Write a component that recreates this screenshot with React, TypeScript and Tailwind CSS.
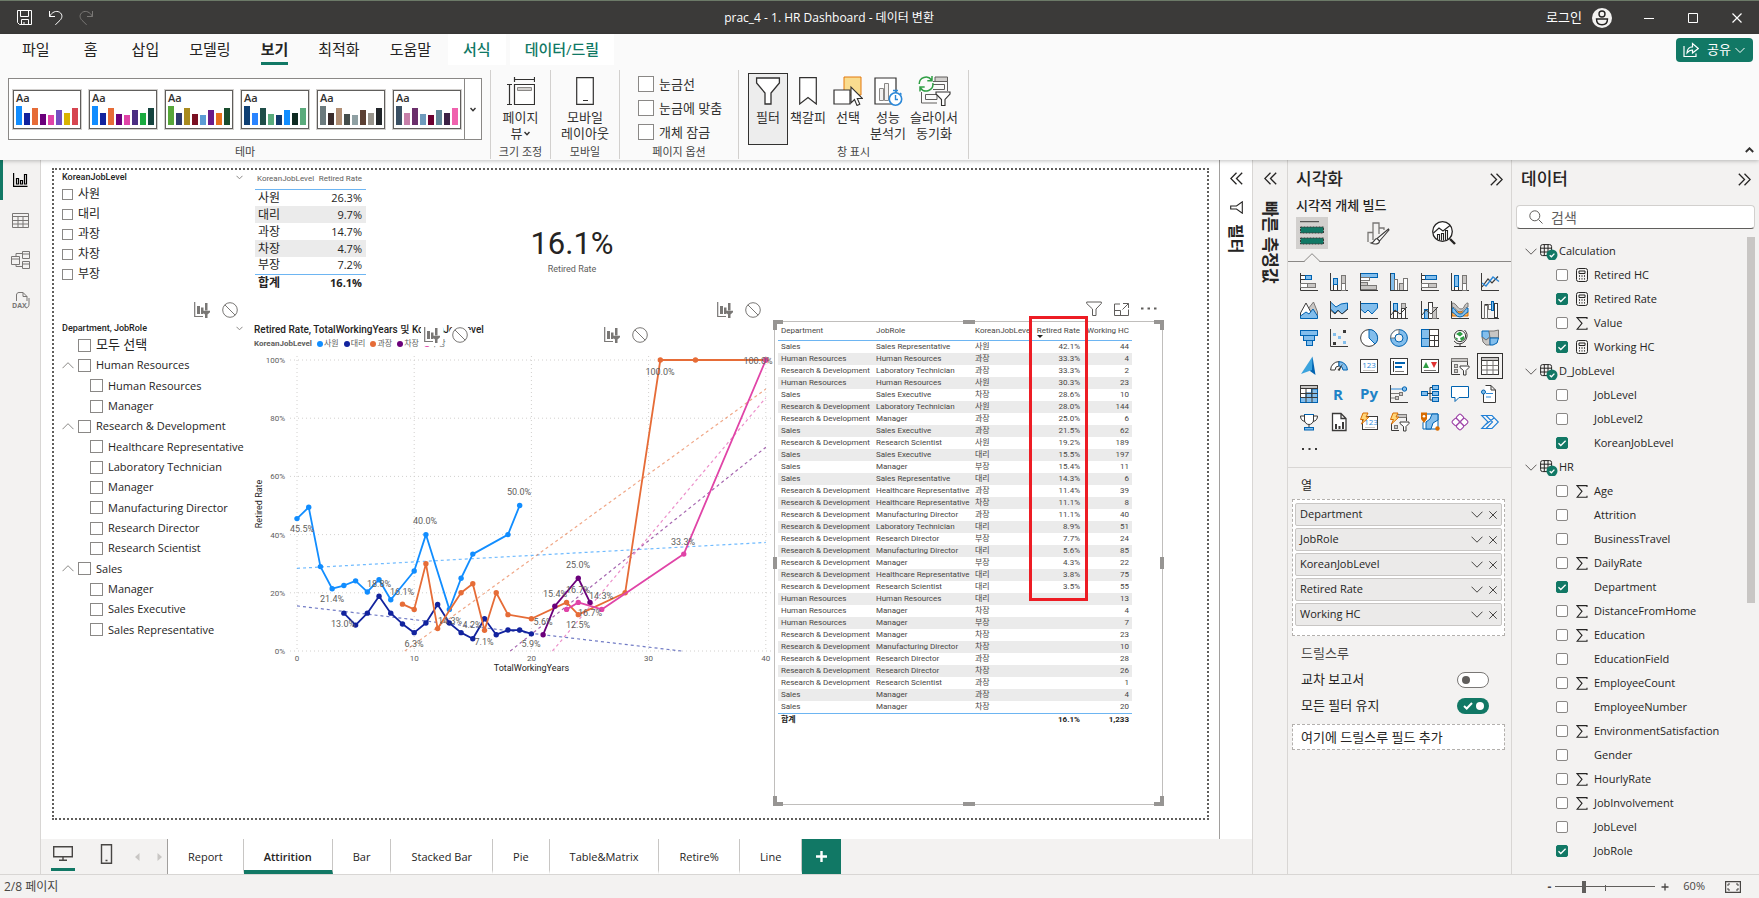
import React from "react";
import clsx from "clsx";

/* ---------- data ---------- */

const themes = [
  ["#118dff", "#12239e", "#e66c37", "#6b007b", "#e044a7", "#744ec2", "#d9b300", "#d64550"],
  ["#118dff", "#12239e", "#e66c37", "#6b007b", "#e044a7", "#4b2e83", "#1aab40", "#15443f"],
  ["#57a639", "#2f3b6e", "#a98b1f", "#7a1022", "#5b9bd5", "#6a1b8a", "#e8701a", "#1a4d2e"],
  ["#0f3f73", "#2a84ff", "#1f4e48", "#5aab7c", "#123a6b", "#118dff", "#0f2b22", "#5aab7c"],
  ["#6b7a7d", "#3a2c2c", "#b08e74", "#444d4b", "#8fa0a3", "#5c4033", "#98948c", "#22262a"],
  ["#3a5064", "#c77fa9", "#6b2f6b", "#6f9bbd", "#6b0030", "#5f8597", "#3d2145", "#f062ae"],
];
const themeBars = [19, 12, 17, 11, 10, 15, 12, 17];

const jobLevels = ["사원", "대리", "과장", "차장", "부장"];

const levelRates = [
  ["사원", "26.3%"],
  ["대리", "9.7%"],
  ["과장", "14.7%"],
  ["차장", "4.7%"],
  ["부장", "7.2%"],
];

const roleTree: { label: string; level: number; open?: boolean }[] = [
  { label: "모두 선택", level: 0 },
  { label: "Human Resources", level: 0, open: true },
  { label: "Human Resources", level: 1 },
  { label: "Manager", level: 1 },
  { label: "Research & Development", level: 0, open: true },
  { label: "Healthcare Representative", level: 1 },
  { label: "Laboratory Technician", level: 1 },
  { label: "Manager", level: 1 },
  { label: "Manufacturing Director", level: 1 },
  { label: "Research Director", level: 1 },
  { label: "Research Scientist", level: 1 },
  { label: "Sales", level: 0, open: true },
  { label: "Manager", level: 1 },
  { label: "Sales Executive", level: 1 },
  { label: "Sales Representative", level: 1 },
];

const HR = "Human Resources";
const RD = "Research & Development";
const rows: [string, string, string, string, string][] = [
  ["Sales", "Sales Representative", "사원", "42.1%", "44"],
  [HR, "Human Resources", "과장", "33.3%", "4"],
  [RD, "Laboratory Technician", "과장", "33.3%", "2"],
  [HR, "Human Resources", "사원", "30.3%", "23"],
  ["Sales", "Sales Executive", "차장", "28.6%", "10"],
  [RD, "Laboratory Technician", "사원", "28.0%", "144"],
  [RD, "Manager", "과장", "25.0%", "6"],
  ["Sales", "Sales Executive", "과장", "21.5%", "62"],
  [RD, "Research Scientist", "사원", "19.2%", "189"],
  ["Sales", "Sales Executive", "대리", "15.5%", "197"],
  ["Sales", "Manager", "부장", "15.4%", "11"],
  ["Sales", "Sales Representative", "대리", "14.3%", "6"],
  [RD, "Healthcare Representative", "과장", "11.4%", "39"],
  [RD, "Healthcare Representative", "차장", "11.1%", "8"],
  [RD, "Manufacturing Director", "과장", "11.1%", "40"],
  [RD, "Laboratory Technician", "대리", "8.9%", "51"],
  [RD, "Research Director", "부장", "7.7%", "24"],
  [RD, "Manufacturing Director", "대리", "5.6%", "85"],
  [RD, "Manager", "부장", "4.3%", "22"],
  [RD, "Healthcare Representative", "대리", "3.8%", "75"],
  [RD, "Research Scientist", "대리", "3.5%", "55"],
  [HR, "Human Resources", "대리", "", "13"],
  [HR, "Manager", "차장", "", "4"],
  [HR, "Manager", "부장", "", "7"],
  [RD, "Manager", "차장", "", "23"],
  [RD, "Manufacturing Director", "차장", "", "10"],
  [RD, "Research Director", "과장", "", "28"],
  [RD, "Research Director", "차장", "", "26"],
  [RD, "Research Scientist", "과장", "", "1"],
  ["Sales", "Manager", "과장", "", "4"],
  ["Sales", "Manager", "차장", "", "20"],
];

type Point = [number, number];
const series: { name: string; color: string; points: Point[]; trend: [Point, Point] }[] = [
  {
    name: "사원",
    color: "#118dff",
    points: [[0, 45.5], [1, 49.4], [2, 29], [3, 21.4], [4, 22.5], [5, 24.1], [6, 20.3], [7, 24.5], [8, 17.6], [10, 27.5], [11, 40], [13, 14.3], [14, 25], [15, 33.3], [18, 40], [19, 50]],
    trend: [[0, 28.4], [40, 37.3]],
  },
  {
    name: "대리",
    color: "#12239e",
    points: [[4, 13], [5, 8.9], [6, 13], [7, 18.8], [8, 13], [9, 9.3], [10, 6.3], [11, 9.6], [12, 16], [13, 9.6], [14, 6.3], [15, 4.2], [16, 11.1], [17, 5.6], [18, 7.2], [19, 7.2], [20, 5.9]],
    trend: [[0, 15.5], [32.8, 0]],
  },
  {
    name: "과장",
    color: "#e66c37",
    points: [[9, 16.1], [10, 14.3], [11, 30], [12, 7.7], [14, 20], [15, 23.1], [16, 7.1], [17, 20], [18, 12.5], [20, 11.1], [23, 16.7], [24, 12.5], [28, 20], [31, 100], [34, 100], [40, 100]],
    trend: [[9.2, 0], [40, 90]],
  },
  {
    name: "차장",
    color: "#6b007b",
    points: [[21, 5.6], [22, 15.4], [24, 25], [25, 16.7]],
    trend: [[18.2, 0], [40, 70]],
  },
  {
    name: "부장",
    color: "#e044a7",
    points: [[23, 14.3], [24, 16.7], [26, 14.3], [33, 33.3], [40, 100]],
    trend: [[21.8, 0], [40, 87]],
  },
];

// [text, x, y] of the data labels inside the plot
const dataLabels: [string, number, number][] = [
  ["45.5%", 52, 178], ["21.4%", 82, 248], ["13.0%", 93, 273], ["18.8%", 129, 233],
  ["16.1%", 152, 241], ["40.0%", 175, 170], ["6.3%", 164, 293], ["14.3%", 200, 270],
  ["4.2%", 222, 274], ["7.1%", 234, 291], ["50.0%", 269, 141], ["5.9%", 281, 293],
  ["5.6%", 293, 271], ["15.4%", 305, 243], ["16.7%", 328, 239], ["14.3%", 351, 245],
  ["16.7%", 340, 262], ["12.5%", 328, 274], ["25.0%", 328, 214], ["33.3%", 433, 191],
  ["100.0%", 410, 21], ["100.0%", 508, 10],
];

type Field = { name: string; kind?: "calc" | "sum"; on?: boolean };
const tables: { name: string; fields: Field[] }[] = [
  {
    name: "Calculation",
    fields: [
      { name: "Retired HC", kind: "calc" },
      { name: "Retired Rate", kind: "calc", on: true },
      { name: "Value", kind: "sum" },
      { name: "Working HC", kind: "calc", on: true },
    ],
  },
  {
    name: "D_JobLevel",
    fields: [{ name: "JobLevel" }, { name: "JobLevel2" }, { name: "KoreanJobLevel", on: true }],
  },
  {
    name: "HR",
    fields: [
      { name: "Age", kind: "sum" },
      { name: "Attrition" },
      { name: "BusinessTravel" },
      { name: "DailyRate", kind: "sum" },
      { name: "Department", on: true },
      { name: "DistanceFromHome", kind: "sum" },
      { name: "Education", kind: "sum" },
      { name: "EducationField" },
      { name: "EmployeeCount", kind: "sum" },
      { name: "EmployeeNumber" },
      { name: "EnvironmentSatisfaction", kind: "sum" },
      { name: "Gender" },
      { name: "HourlyRate", kind: "sum" },
      { name: "JobInvolvement", kind: "sum" },
      { name: "JobLevel" },
      { name: "JobRole", on: true },
    ],
  },
];

const pages = ["Report", "Attirition", "Bar", "Stacked Bar", "Pie", "Table&Matrix", "Retire%", "Line"];

/* ---------- small pieces ---------- */

const Svg: React.FC<React.SVGProps<SVGSVGElement> & { s?: number; w?: number; h?: number }> = ({ s = 16, w, h, children, ...rest }) => (
  <svg width={w ?? s} height={h ?? s} viewBox={`0 0 ${w ?? s} ${h ?? s}`} fill="none" stroke="currentColor" className="shrink-0" aria-hidden="true" {...rest}>
    {children}
  </svg>
);

const ChevronDown = ({ w = 12 }: { w?: number }) => (
  <Svg w={w} h={7}>
    <path d={w === 12 ? "M.5 .7 6 6.2 11.5 .7" : "M.5 1 5 5.5 9.5 1"} />
  </Svg>
);

const ChevronUp = () => (
  <Svg w={12} h={7}>
    <path d="M.5 6.2 6 .7 11.5 6.2" />
  </Svg>
);

const DoubleChevron = ({ left }: { left?: boolean }) => (
  <Svg w={13} h={13}>
    <path d={left ? "M6.5 .8.8 6.5 6.5 12.2M12.2 .8 6.5 6.5 12.2 12.2" : "M.8 .8 6.5 6.5 .8 12.2M6.5 .8 12.2 6.5 6.5 12.2"} strokeWidth="1.3" />
  </Svg>
);

const Check = ({ on, size, label }: { on?: boolean; size: string; label: string }) => (
  <span className="relative flex shrink-0">
    <input
      type="checkbox"
      defaultChecked={on}
      aria-label={label}
      className={clsx("peer appearance-none border border-[#8a8886] bg-white checked:border-[#117865] checked:bg-[#117865]", size)}
    />
    <svg viewBox="0 0 12 12" className="pointer-events-none absolute inset-0 hidden peer-checked:block" fill="none" stroke="#fff" strokeWidth="1.3">
      <path d="M2.5 6.2 4.8 8.5 9.6 3.7" />
    </svg>
  </span>
);

/* ---------- title bar and ribbon ---------- */

const TitleBar = () => (
  <header className="flex h-[34px] shrink-0 items-center border-t border-[#6c7a68] bg-[#3b3a39] text-white">
    <div className="flex flex-6 items-center gap-4 pl-[17px]">
      <button aria-label="저장">
        <Svg s={15}>
          <path d="M.5 .5H14.5V14.5H2.5L.5 12.5ZM3.5 .5V6.5H11.5V.5M4.5 14.5V9.5H11.5V14.5M7 12V14" />
        </Svg>
      </button>
      <button aria-label="실행 취소">
        <Svg s={15}>
          <path d="M1.5 1V6.5H7M1.5 6.5C4 2 8 .3 11.5 2.2 15 4.5 14.3 8 12 10.3L7.2 15" />
        </Svg>
      </button>
      <button aria-label="다시 실행" className="text-[#7a7876]">
        <Svg s={15}>
          <path d="M13.5 1V6.5H8M13.5 6.5C11 2 7 .3 3.5 2.2 0 4.5 .7 8 3 10.3L7.8 15" />
        </Svg>
      </button>
    </div>
    <h1 className="text-[12px]">prac_4 - 1. HR Dashboard - 데이터 변환</h1>
    <div className="flex flex-7 items-center justify-end">
      <button className="flex items-center gap-2.5 text-[13px]">
        로그인
        <svg width="20" height="20" viewBox="0 0 20 20" aria-hidden="true">
          <circle cx="10" cy="10" r="10" fill="#f3f2f1" />
          <circle cx="10" cy="6" r="3" fill="none" stroke="#252423" strokeWidth="1.4" />
          <path d="M4.5 11H15.5C15.5 15 13 16.8 10 16.8S4.5 15 4.5 11Z" fill="none" stroke="#252423" strokeWidth="1.4" />
        </svg>
      </button>
      <button aria-label="최소화" className="ml-8">
        <Svg s={10}><path d="M0 5.5H10" /></Svg>
      </button>
      <button aria-label="최대화" className="ml-[34px]">
        <Svg s={10}><path d="M.5 .5H9.5V9.5H.5Z" /></Svg>
      </button>
      <button aria-label="닫기" className="mr-[17px] ml-[34px]">
        <Svg s={10}><path d="M.5 .5 9.5 9.5M9.5 .5 .5 9.5" strokeWidth="1.2" /></Svg>
      </button>
    </div>
  </header>
);

const menu = ["파일", "홈", "삽입", "모델링", "보기", "최적화", "도움말"];

const MenuTabs = () => (
  <nav className="flex h-8 pl-[7px] text-[15px] text-[#252423]">
    {menu.map((m) => (
      <button key={m} className={clsx("flex h-[31px] justify-center px-[15px]", m === "홈" && "min-w-[52px]")}>
        <span className={clsx("flex h-full items-center border-b-[3px] pt-0.5", m === "보기" ? "border-[#117865] font-bold" : "border-transparent")}>{m}</span>
      </button>
    ))}
    <button className="ml-0.5 h-[31px] bg-white px-[15px] font-medium text-[#117865]">서식</button>
    <button className="ml-1 h-[31px] bg-white px-[15px] font-medium text-[#117865]">데이터/드릴</button>
    <div className="flex flex-1 justify-end pt-1 pr-1.5">
      <button className="flex h-6 items-center rounded bg-[#117865] pr-2 pl-[7px] text-[13px] text-white">
        <Svg s={16} className="mr-2">
          <path d="M1 4V14.5H13V11.5M4 11C4 7 6.5 4.8 9.5 4.8V1.5L15.3 6.5 9.5 11V8C7 8 5.5 9 4 11Z" strokeWidth="1.2" />
        </Svg>
        공유
        <span className="ml-1"><ChevronDown w={10} /></span>
      </button>
    </div>
  </nav>
);

const Group: React.FC<{ label: string; className: string; children: React.ReactNode }> = ({ label, className, children }) => (
  <section className={clsx("mt-1 flex h-[89px] flex-col border-r border-[#d2d0ce]", className)}>
    <div className="h-[75px]">{children}</div>
    <p className="text-center text-[11px] leading-[14px] text-[#444]">{label}</p>
  </section>
);

const RibbonButton: React.FC<{ icon: React.ReactNode; className?: string; on?: boolean; children: React.ReactNode }> = ({ icon, className = "w-10", on, children }) => (
  <button className={clsx("mt-[3px] flex h-[72px] flex-col items-center gap-1 border pt-[3px] text-[13px] leading-4 whitespace-nowrap", on ? "border-[#323130] bg-[#ededed]" : "border-transparent", className)}>
    <span className="flex h-7 items-center">{icon}</span>
    <span>{children}</span>
  </button>
);

const funnel28 = (
  <Svg s={28}><path d="M2.6 1H25.4V6L17 16V27H11V16L2.6 6Z" strokeWidth="1.3" fill="#fff" /></Svg>
);
const pageViewIcon = (
  <Svg s={28}>
    <path d="M7.5 0V5M27.5 0V5M7.5 2.5H27.5M0 7.5H5M0 27.5H5M2.5 7.5V27.5" strokeWidth="1.2" />
    <path d="M7.5 7.5H27.5V27.5H7.5Z" fill="#fff" strokeWidth="1.2" />
    <path d="M10.5 10.5H24.5V13.5H10.5Z" fill="#d2d0ce" stroke="#8a8886" />
  </Svg>
);
const mobileIcon = (
  <Svg w={18} h={28}><path d="M.7 .7H17.3V27.3H.7Z" fill="#fff" strokeWidth="1.2" /><path d="M7 23.5H12" /></Svg>
);
const bookmarkIcon = (
  <Svg w={18} h={28}><path d="M.7 .7H17.3V27L9 20.5.7 27Z" fill="#fff" strokeWidth="1.2" /></Svg>
);
const selectIcon = (
  <Svg s={30}>
    <path d="M11 1H28V19H11Z" fill="#f9dc8f" stroke="#e3790d" />
    <path d="M1 14H17V28H1Z" fill="#fff" strokeWidth="1.2" />
    <path d="M18 11V27L21.5 23.5 24 29.5 26.8 28.3 24.3 22.5H29.5Z" fill="#fff" strokeWidth="1.1" />
  </Svg>
);
const perfIcon = (
  <Svg s={29}>
    <path d="M1 1H22V27H1Z" fill="#fff" strokeWidth="1.2" />
    <path d="M5.5 11.5H9.5V23.5H5.5ZM10.5 6.5H14.5V23.5H10.5Z" stroke="#8a8886" fill="#f3f2f1" />
    <circle cx="21.5" cy="22" r="6.2" fill="#fff" stroke="#2b88d8" strokeWidth="1.6" />
    <path d="M21.5 18V22.5H24M19 13.5H24M21.5 13.5V16M26 16 27.5 17.5" stroke="#2b88d8" strokeWidth="1.4" />
  </Svg>
);
const syncIcon = (
  <Svg w={33} h={30}>
    <path d="M17 1H29.5V5.5H17Z" fill="#d2d0ce" stroke="#605e5c" />
    <path d="M15 5.5H29.5V15M15 8.5H26.5V13.5H15M3.5 16V27H19M7.5 18.5H19V23.5H7.5Z" stroke="#605e5c" />
    <path d="M18 16H32V18L27 23.5V29.5H23.5V23.5L18 18Z" fill="#fff" strokeWidth="1.1" />
    <path d="M1.2 8A6.8 6.8 0 0 1 13.5 4M14.8 7A6.8 6.8 0 0 1 2.5 12M14 0V4.7H9.3M2 15.5V11H6.7" stroke="#2f9e44" strokeWidth="1.5" />
  </Svg>
);

const Ribbon = () => (
  <div className="relative flex h-[94px] text-[#323130]">
    <Group label="테마" className="w-[491px] px-2">
      <div className="mt-2 flex h-[62px] border border-[#8a8886] bg-white">
        <div className="flex flex-1 items-center gap-2 pl-1">
          {themes.map((colors, i) => (
            <button key={i} aria-label={`테마 ${i + 1}`} className="flex h-[39px] w-[68px] flex-col justify-between border border-[#605e5c] px-0.5 pb-[3px] text-left shadow-[0_0_0_1px_#d2d0ce]">
              <span className="text-[11px] leading-[14px] font-semibold">Aa</span>
              <span className="flex h-[19px] items-end gap-0.5">
                {colors.map((c, j) => (
                  <span key={j} className="w-1.5" style={{ background: c, height: themeBars[j] }} />
                ))}
              </span>
            </button>
          ))}
        </div>
        <button aria-label="더 많은 테마" className="flex w-[17px] items-center justify-center border-l border-[#8a8886]">
          <Svg w={6} h={5}><path d="M.5 1 3 3.8 5.5 1" strokeWidth="1.4" /></Svg>
        </button>
      </div>
    </Group>
    <Group label="크기 조정" className="w-[60px]">
      <RibbonButton icon={pageViewIcon} className="w-full">
        페이지
        <span className="flex items-center justify-center gap-0.5">
          뷰 <Svg w={6} h={5}><path d="M.5 1 3 3.8 5.5 1" strokeWidth="1.4" /></Svg>
        </span>
      </RibbonButton>
    </Group>
    <Group label="모바일" className="w-[69px]">
      <RibbonButton icon={mobileIcon} className="w-full">
        모바일
        <br />
        레이아웃
      </RibbonButton>
    </Group>
    <Group label="페이지 옵션" className="w-[119px]">
      <div className="flex flex-col gap-2 pt-1.5 pl-[18px]">
        {["눈금선", "눈금에 맞춤", "개체 잠금"].map((t) => (
          <label key={t} className="flex items-center gap-[5px] text-[13px] leading-4">
            <Check size="size-4" label={t} />
            {t}
          </label>
        ))}
      </div>
    </Group>
    <Group label="창 표시" className="w-[230px]">
      <div className="flex pl-[9px]">
        <RibbonButton icon={funnel28} on>필터</RibbonButton>
        <RibbonButton icon={bookmarkIcon}>책갈피</RibbonButton>
        <RibbonButton icon={selectIcon}>선택</RibbonButton>
        <RibbonButton icon={perfIcon}>
          성능
          <br />
          분석기
        </RibbonButton>
        <RibbonButton icon={syncIcon} className="w-[52px]">
          슬라이서
          <br />
          동기화
        </RibbonButton>
      </div>
    </Group>
    <div className="flex flex-1 items-end justify-end pr-[5px] pb-[7px]">
      <button aria-label="리본 축소">
        <Svg w={9} h={6}><path d="M.8 5 4.5 1.3 8.2 5" strokeWidth="1.9" /></Svg>
      </button>
    </div>
  </div>
);

/* ---------- left rail ---------- */

const rail = [
  {
    label: "보고서 보기",
    icon: (
      <Svg w={15} h={14}><path d="M.6 0V13.4H14.5M3.5 5.5H5.5V11H3.5ZM7.5 7.5H9.5V11H7.5ZM11.5 1.5H13.5V11H11.5Z" strokeWidth="1.2" /></Svg>
    ),
  },
  {
    label: "테이블 뷰",
    icon: (
      <Svg w={17} h={15}><path d="M.5 .5H16.5V14.5H.5ZM.5 3.5H16.5M.5 7.5H16.5M.5 11H16.5M6 3.5V14.5M11 3.5V14.5" /></Svg>
    ),
  },
  {
    label: "모델 보기",
    icon: (
      <Svg w={19} h={18}><path d="M.5 5.5H8.5V13.5H.5ZM.5 8H8.5M11.5 .5H18.5V7.5H11.5ZM11.5 3H18.5M11.5 10.5H18.5V17.5H11.5ZM11.5 13H18.5M5 5.5V2.5H11.5M5 13.5V15.5H11.5" /></Svg>
    ),
  },
  {
    label: "DAX 쿼리 뷰",
    icon: (
      <Svg w={18} h={17}>
        <path d="M4.5 9V3C4.5 1.5 5.5 .5 7 .5H11L15 4.5V9M11 .5V4.5H15M17 6V12C17 14.5 16 15.5 14 16" />
        <text x="0" y="15.5" fontSize="7" fontWeight="700" fill="currentColor" stroke="none" fontFamily="Open Sans, sans-serif">DAX</text>
      </Svg>
    ),
  },
];

const Rail = () => (
  <nav className="w-[41px] shrink-0 border-r border-[#d8d6d4] bg-[#f3f2f1]">
    {rail.map((r, i) => (
      <button key={r.label} aria-label={r.label} className={clsx("flex h-10 w-full items-center justify-center border-l-[3px] pr-0.5", i === 0 ? "border-[#117865] text-black" : "border-transparent text-[#797775]")}>
        {r.icon}
      </button>
    ))}
  </nav>
);

/* ---------- report canvas ---------- */

const HoverIcons = ({ className }: { className: string }) => (
  <div className={clsx("absolute flex gap-1.5 text-[#797775]", className)}>
    <button aria-label="필터" className="rounded-sm bg-white p-[3px]">
      <Svg s={16}>
        <path d="M.7 0V14.5H9" strokeWidth="1.2" />
        <path d="M3 4H6V12H3ZM7 5.5H9.5V12H7ZM11 1H13.5V8.5H11Z" fill="currentColor" stroke="none" />
        <path d="M8.5 8.8H16V10.3L13.5 12.5V16H11V12.5L8.5 10.3Z" fill="currentColor" stroke="none" />
      </Svg>
    </button>
    <button aria-label="없음" className="rounded-full bg-white p-[3px]">
      <Svg s={16}><circle cx="8" cy="8" r="7.3" /><path d="M2.8 2.8 13.2 13.2" /></Svg>
    </button>
  </div>
);

const SlicerHeader = ({ children }: { children: React.ReactNode }) => (
  <h2 className="flex h-[13px] items-center justify-between font-['Roboto',sans-serif] text-[9px] font-medium text-[#252423]">
    {children}
    <span className="text-[#8a8886]"><Svg w={7} h={5}><path d="M.5 .8 3.5 3.8 6.5 .8" /></Svg></span>
  </h2>
);

const LevelSlicer = () => (
  <section className="absolute top-px left-2 w-[181px]">
    <SlicerHeader>KoreanJobLevel</SlicerHeader>
    {jobLevels.map((l) => (
      <label key={l} className="flex h-5 items-center gap-[5px] text-[12px] text-[#252423]">
        <Check size="size-[11px]" label={l} />
        {l}
      </label>
    ))}
  </section>
);

const RoleSlicer = () => (
  <section className="absolute top-[152px] left-2 w-[181px]">
    <SlicerHeader>Department, JobRole</SlicerHeader>
    <div className="grid h-[305px] grid-rows-[repeat(15,1fr)] text-[11px] whitespace-nowrap text-[#252423]">
      {roleTree.map((n, i) => (
        <div key={i} className={clsx("flex items-center", n.level === 1 && "pl-3", i === 0 && "text-[13px]")}>
          <span className="w-4 text-[#8a8886]">{n.open && <ChevronUp />}</span>
          <label className="flex items-center gap-[5px]">
            <Check size="size-[13px]" label={n.label} />
            {n.label}
          </label>
        </div>
      ))}
    </div>
  </section>
);

const LevelTable = () => (
  <table className="absolute top-0 left-[201px] w-[111px] table-fixed border-collapse text-[11px] leading-4 text-[#252423]">
    <thead className="border-b border-[#6db5f2] font-['Roboto',sans-serif] text-[8px] text-[#605e5c]">
      <tr className="h-[19px]">
        <th className="w-[61px] p-0 pl-0.5 text-left font-normal">KoreanJobLevel</th>
        <th className="p-0 pr-1 text-right font-normal">Retired Rate</th>
      </tr>
    </thead>
    <tbody>
      {levelRates.map(([l, v]) => (
        <tr key={l} className="h-[17px] even:bg-[#ebebeb]">
          <td className="p-0 pl-[3px] text-[12px] leading-4">{l}</td>
          <td className="p-0 pr-1 text-right">{v}</td>
        </tr>
      ))}
    </tbody>
    <tfoot className="border-t border-[#6db5f2] font-bold">
      <tr className="h-[17px]">
        <td className="p-0 pl-[3px] text-[12px] leading-4">합계</td>
        <td className="p-0 pr-1 text-right">16.1%</td>
      </tr>
    </tfoot>
  </table>
);

const px = (x: number) => 47 + x * 11.72;
const py = (v: number) => 300 - v * 2.91;

const LineChart = () => (
  <figure className="absolute top-[152px] left-[196px] w-[530px] font-['Roboto','Noto_Sans_CJK_KR',sans-serif]">
    <figcaption className="h-[15px] pl-1 text-[10px] leading-[15px] font-medium whitespace-nowrap text-[#252423]">
      Retired Rate, TotalWorkingYears 및 KoreanJobLevel
    </figcaption>
    <ul className="flex h-3.5 items-center gap-[5px] pl-1 text-[8px] text-[#605e5c]">
      <li className="font-bold">KoreanJobLevel</li>
      {series.map((s) => (
        <li key={s.name} className="flex items-center gap-px">
          <span className="size-1.5 rounded-full" style={{ background: s.color }} />
          {s.name}
        </li>
      ))}
    </ul>
    <svg width="530" height="325" viewBox="0 0 530 325" fontSize="9" fill="#605e5c" textAnchor="middle">
      <g stroke="#d2d0ce" strokeDasharray="1 3">
        {[0, 20, 40, 60, 80, 100].map((v) => (
          <line key={v} x1="40" x2="521" y1={py(v)} y2={py(v)} />
        ))}
        {[0, 10, 20, 30, 40].map((x) => (
          <line key={x} x1={px(x)} x2={px(x)} y1="5" y2="300" />
        ))}
      </g>
      <g fontSize="8">
        {[0, 20, 40, 60, 80, 100].map((v) => (
          <text key={v} x="35" y={py(v) + 3} textAnchor="end">{v}%</text>
        ))}
        {[0, 10, 20, 30, 40].map((x) => (
          <text key={x} x={px(x)} y="310">{x}</text>
        ))}
      </g>
      <g fill="#252423">
        <text x={px(20)} y="320">TotalWorkingYears</text>
        <text transform="translate(12 153) rotate(-90)">Retired Rate</text>
      </g>
      {series.map((s) => (
        <line key={s.name} x1={px(s.trend[0][0])} y1={py(s.trend[0][1])} x2={px(s.trend[1][0])} y2={py(s.trend[1][1])} stroke={s.color} strokeWidth="1.2" strokeOpacity="0.6" strokeDasharray="3 3" />
      ))}
      {series.map((s) => (
        <g key={s.name} fill={s.color}>
          <polyline points={s.points.map(([x, v]) => `${px(x)},${py(v)}`).join(" ")} fill="none" stroke={s.color} strokeWidth="1.8" strokeLinejoin="round" />
          {s.points.map(([x, v]) => (
            <circle key={x} cx={px(x)} cy={py(v)} r="2.7" />
          ))}
        </g>
      ))}
      {dataLabels.map(([t, x, y], i) => (
        <text key={i} x={x} y={y + 3}>{t}</text>
      ))}
    </svg>
  </figure>
);

const handle = "absolute border-[#979593]";

const DetailTable = () => (
  <section className="absolute top-[151px] left-[720px] h-[484px] w-[389px] border border-[#c0bebc] bg-white pl-[3px]">
    <table className="w-[354px] table-fixed border-collapse font-['Roboto','Noto_Sans_CJK_KR',sans-serif] text-[8px] leading-3 whitespace-nowrap text-[#484644]">
      <thead className="border-b border-[#6db5f2]">
        <tr className="h-[18px]">
          <th className="w-[95px] p-0 pl-[3px] text-left font-normal">Department</th>
          <th className="w-[99px] p-0 pl-[3px] text-left font-normal">JobRole</th>
          <th className="w-[62px] p-0 pl-[3px] text-left font-normal">KoreanJobLevel</th>
          <th className="relative w-[54px] p-0 pr-2 text-right font-normal">
            Retired Rate
            <svg width="6" height="3" viewBox="0 0 6 3" className="absolute bottom-0.5 left-[3px]" aria-hidden="true"><path d="M0 0H6L3 3Z" fill="#252423" /></svg>
          </th>
          <th className="w-11 p-0 pr-[3px] text-right font-normal">
            <span className="flex justify-end">Working HC</span>
          </th>
        </tr>
      </thead>
      <tbody>
        {rows.map((r, i) => (
          <tr key={i} className="h-3 even:bg-[#ebebeb]">
            <td className="p-0 pl-[3px]">{r[0]}</td>
            <td className="p-0 pl-[3px]">{r[1]}</td>
            <td className="p-0 pl-[3px]">{r[2]}</td>
            <td className="p-0 pr-2 text-right">{r[3]}</td>
            <td className="p-0 pr-[3px] text-right">{r[4]}</td>
          </tr>
        ))}
      </tbody>
      <tfoot className="border-t border-[#6db5f2] font-bold text-[#252423]">
        <tr className="h-3">
          <td className="p-0 pl-[3px]" colSpan={3}>합계</td>
          <td className="p-0 pr-2 text-right">16.1%</td>
          <td className="p-0 pr-[3px] text-right">1,233</td>
        </tr>
      </tfoot>
    </table>
    <i className={clsx(handle, "-top-0.5 -left-0.5 size-2.5 border-t-4 border-l-4")} />
    <i className={clsx(handle, "-top-0.5 -right-0.5 size-2.5 border-t-4 border-r-4")} />
    <i className={clsx(handle, "-bottom-0.5 -left-0.5 size-2.5 border-b-4 border-l-4")} />
    <i className={clsx(handle, "-right-0.5 -bottom-0.5 size-2.5 border-r-4 border-b-4")} />
    <i className={clsx(handle, "-top-0.5 left-1/2 -ml-1.5 w-3 border-t-4")} />
    <i className={clsx(handle, "-bottom-0.5 left-1/2 -ml-1.5 w-3 border-t-4")} />
    <i className={clsx(handle, "top-1/2 -left-0.5 -mt-1.5 h-3 border-l-4")} />
    <i className={clsx(handle, "top-1/2 -right-0.5 -mt-1.5 h-3 border-l-4")} />
  </section>
);

const Canvas = () => (
  <main className="flex min-w-0 flex-1 bg-white">
    <div className="relative mt-2 mr-2.5 mb-[19px] ml-[11px] flex-1 border-2 border-dotted border-[#605e5c]">
      <LevelSlicer />
      <LevelTable />
      <section className="absolute top-14 left-[440px] w-[156px] text-center font-['Roboto',sans-serif]">
        <p className="text-[31px] leading-9 text-[#252423]">16.1%</p>
        <p className="text-[9px] leading-3.5 text-[#605e5c]">Retired Rate</p>
      </section>
      <RoleSlicer />
      <LineChart />
      <HoverIcons className="top-[129px] left-[137px]" />
      <HoverIcons className="top-[154px] left-[367px]" />
      <HoverIcons className="top-[154px] left-[547px]" />
      <HoverIcons className="top-[129px] left-[660px]" />
      <div className="absolute top-[131px] left-[1032px] flex items-center gap-3 text-[#605e5c]">
        <button aria-label="필터">
          <Svg s={16}><path d="M.7 1H15.3V2.5L10 8V14.5H6.5V8L.7 2.5Z" /></Svg>
        </button>
        <button aria-label="포커스 모드">
          <Svg s={15}><path d="M6 2H.5V13.5H14.5V7.5M9 1.5H14.5V6M14.5 1.5 8.5 7.5M.5 8.5H6.5V13.5" /></Svg>
        </button>
        <button aria-label="추가 옵션">
          <Svg s={16}><path d="M0 6.5H2.5V8.5H0ZM6.5 6.5H9V8.5H6.5ZM13 6.5H15.5V8.5H13Z" fill="currentColor" stroke="none" /></Svg>
        </button>
      </div>
      <DetailTable />
      <div className="absolute top-[146px] left-[975px] h-[285px] w-[59px] border-[3px] border-[#ed1c24]" />
    </div>
  </main>
);

const FilterPane = () => (
  <aside className="flex w-[33px] shrink-0 flex-col items-center border-l border-[#a19f9d] bg-white pt-3 text-[#252423]">
    <button aria-label="필터 창 확장"><DoubleChevron left /></button>
    <Svg s={13} className="mt-4"><path d="M12.3 .8V12.2L6.5 8H.7V5H6.5Z" strokeWidth="1.1" /></Svg>
    <h2 className="mt-2.5 text-[16px] leading-5 font-bold [text-orientation:sideways] [writing-mode:vertical-rl]">필터</h2>
  </aside>
);

const PageTabs = () => (
  <div className="flex h-[35px] shrink-0 bg-[#f3f2f1] text-[11px] text-[#252423]">
    <button aria-label="데스크톱 레이아웃" className="mt-[5px] ml-2.5 flex h-[27px] w-6 flex-col items-center justify-between border-b-[3px] border-[#117865] pt-0.5">
      <Svg w={20} h={15}><path d="M.7 .7H19.3V10.8H.7ZM10 11V14M6 14.3H14" strokeWidth="1.4" stroke="#484644" /></Svg>
    </button>
    <button aria-label="모바일 레이아웃" className="mt-[5px] ml-[25px] h-5">
      <Svg w={13} h={20}><path d="M1.5 .7H11.5V19.3H1.5ZM5.5 16.5H7.5" strokeWidth="1.4" stroke="#484644" /></Svg>
    </button>
    <button aria-label="이전 페이지" className="ml-[22px]">
      <Svg w={5} h={8}><path d="M4.5 0V8L0 4Z" fill="#c8c6c4" stroke="none" /></Svg>
    </button>
    <button aria-label="다음 페이지" className="mr-[5px] ml-[17px]">
      <Svg w={5} h={8}><path d="M.5 0V8L5 4Z" fill="#c8c6c4" stroke="none" /></Svg>
    </button>
    <div className="flex border-l border-[#a19f9d]">
      {pages.map((p) => (
        <button key={p} className={clsx("border-r border-b-[4px] border-r-[#c8c6c4] bg-white px-5 pt-1.5", p === "Attirition" ? "border-b-[#117865] font-semibold" : "border-b-white")}>
          {p}
        </button>
      ))}
    </div>
    <button aria-label="새 페이지" className="flex w-[39px] items-center justify-center bg-[#117865] text-white">
      <Svg s={11}><path d="M5.5 0V11M0 5.5H11" strokeWidth="2.4" /></Svg>
    </button>
  </div>
);

const QuickMeasures = () => (
  <aside className="flex w-9 shrink-0 flex-col items-center border-x border-[#d8d6d4] bg-[#f3f2f1] pt-3 text-[#252423]">
    <button aria-label="빠른 측정값 창 확장"><DoubleChevron left /></button>
    <h2 className="mt-4 text-[17px] leading-5 font-bold [text-orientation:sideways] [writing-mode:vertical-rl]">빠른 측정값</h2>
  </aside>
);

/* ---------- visualization gallery icons ---------- */

const K = "#3b3a39";
const B = "#0063b1";
const L = "#83beec";
const G = "#c8c6c4";
const D = "#797775";

const Box = ({ r, f = "#fff", s = K }: { r: [number, number, number, number]; f?: string; s?: string }) => (
  <rect x={r[0]} y={r[1]} width={r[2]} height={r[3]} fill={f} stroke={s} />
);
const axis = <path d="M.5 0V17.5H18" stroke={K} />;
const bolt = <path d="M3 0H8L6 4H9L1.5 11 3.5 6.5H.5Z" fill="#ffd679" stroke="#d86c00" />;

const gallery: [string, React.ReactNode][] = [
  ["누적 가로 막대형 차트", <>{axis}<Box r={[0.5, 2.5, 5, 4]} /><Box r={[5.5, 2.5, 6, 4]} f={L} s={B} /><Box r={[0.5, 10.5, 7, 4]} s={D} /><Box r={[7.5, 10.5, 8, 4]} f={G} s={D} /></>],
  ["누적 세로 막대형 차트", <>{axis}<Box r={[3.5, 11.5, 4, 6]} /><Box r={[3.5, 5.5, 4, 6]} f={L} s={B} /><Box r={[11.5, 10.5, 4, 7]} s={D} /><Box r={[11.5, 2.5, 4, 8]} f={G} s={D} /></>],
  ["묶은 가로 막대형 차트", <><Box r={[0.5, 0.5, 17, 4]} f={L} s={B} /><Box r={[0.5, 4.5, 9, 3]} s={D} /><Box r={[0.5, 9.5, 7, 3]} f={G} s={D} /><Box r={[0.5, 12.5, 16, 4]} f={G} s={D} /><path d="M.5 0V17.5H18" stroke={K} /></>],
  ["묶은 세로 막대형 차트", <><Box r={[0.5, 0.5, 4, 17]} f={L} s={B} /><Box r={[4.5, 6.5, 3, 11]} s={D} /><Box r={[9.5, 10.5, 4, 7]} f={G} s={D} /><Box r={[13.5, 5.5, 4, 12]} s={D} /><path d="M.5 0V17.5H18" stroke={K} /></>],
  ["100% 누적 가로 막대형 차트", <>{axis}<Box r={[0.5, 2.5, 4, 4]} /><Box r={[4.5, 2.5, 11, 4]} f={L} s={B} /><Box r={[0.5, 10.5, 7, 4]} s={D} /><Box r={[7.5, 10.5, 8, 4]} f={G} s={D} /></>],
  ["100% 누적 세로 막대형 차트", <>{axis}<Box r={[3.5, 13.5, 4, 4]} /><Box r={[3.5, 2.5, 4, 11]} f={L} s={B} /><Box r={[11.5, 10.5, 4, 7]} s={D} /><Box r={[11.5, 2.5, 4, 8]} f={G} s={D} /></>],
  ["꺾은선형 차트", <>{axis}<path d="M1 14 7 6 11 10 17 3.5" stroke={K} strokeWidth="1.2" /><path d="M1 10 5 13 12 4 18 8.5" stroke="#2b88d8" strokeWidth="1.4" /></>],
  ["영역형 차트", <><path d="M1 17 13.5 1 17.5 11V17Z" fill={G} stroke={D} /><path d="M.5 17V12L6 2 14 17Z" fill="#fff" stroke={K} /><path d="M.5 17.5V15L6 11 9 13 13 8 17.5 15V17.5Z" fill={L} stroke={B} /></>],
  ["누적 영역형 차트", <><path d="M.5 1 6 6 11 3 17.5 2V8L12 13 8 9 5 12 .5 8Z" fill={L} stroke={B} /><path d="M.5 9 5 13 8 9.5 12 13 18 8" stroke={K} />{axis}</>],
  ["100% 누적 영역형 차트", <><path d="M.5 2.5H17.5V7L12 13 8 9 5 12 .5 8Z" fill={L} stroke={B} />{axis}</>],
  ["꺾은선형 및 누적 세로 막대형 차트", <>{axis}<Box r={[3.5, 2.5, 4, 8]} f={L} s={B} /><Box r={[3.5, 10.5, 4, 7]} /><Box r={[11.5, 2.5, 4, 5]} f={G} s={D} /><Box r={[11.5, 7.5, 4, 10]} /><path d="M1 14 5 9 10 13 17 6" stroke={K} /></>],
  ["꺾은선형 및 묶은 세로 막대형 차트", <>{axis}<Box r={[3.5, 8.5, 4, 9]} f={L} s={B} /><Box r={[7.5, 1.5, 4, 16]} /><Box r={[11.5, 6.5, 4, 11]} f={G} s={D} /><path d="M1 14 5 9 10 13 17 6" stroke={K} /></>],
  ["리본 차트", <><path d="M1 2C6 2 6 8 10 8S13 2 17 2V6C13 6 13 11 9 11S5 6 1 6Z" fill={G} stroke={D} /><path d="M1 11H17V15H1Z" fill="#f7b665" stroke="#d86c00" /><path d="M1 7C5 7 5 13 9 13S13 8 17 7V11C14 12 13 16 9 16S4 12 1 11Z" fill={L} stroke={B} />{axis}</>],
  ["폭포 차트", <>{axis}<Box r={[3.5, 4.5, 3, 13]} s={D} /><path d="M3.5 3.5H8V8H11" stroke={K} /><Box r={[7.5, 3.5, 3, 5]} s={D} /><Box r={[10.5, 0.5, 2, 9]} f={L} s={B} /><Box r={[13.5, 2.5, 3, 14]} /></>],
  ["깔때기형", <><Box r={[0.5, 1.5, 17, 5]} f={L} s={B} /><Box r={[3.5, 6.5, 11, 5]} f={L} s={B} /><Box r={[6.5, 11.5, 6, 5]} f={L} s={B} /></>],
  ["분산형 차트", <>{axis}<path d="M13 1H16V4H13ZM3 13H6V16H3Z" fill={K} /><path d="M3 4H6V7H3ZM8 7H11V10H8ZM13 12H16V15H13Z" fill={L} /></>],
  ["원형 차트", <><circle cx="9" cy="9" r="8.4" fill="#fff" stroke={K} /><path d="M9 .6A8.4 8.4 0 0 1 15 15L9 9Z" fill={L} stroke={B} /></>],
  ["도넛형 차트", <><circle cx="9" cy="9" r="8.4" fill={L} stroke={B} /><path d="M.6 9A8.4 8.4 0 0 1 9 .6V5A4 4 0 0 0 5 9Z" fill="#fff" stroke={D} /><circle cx="9" cy="9" r="4" fill="#f3f2f1" stroke={B} /></>],
  ["Treemap", <><Box r={[0.5, 0.5, 8, 9]} f={L} s={B} /><Box r={[0.5, 9.5, 8, 8]} f={L} s={B} /><Box r={[8.5, 0.5, 9, 6]} /><Box r={[8.5, 6.5, 5, 5]} /><Box r={[13.5, 6.5, 4, 5]} /><Box r={[8.5, 11.5, 9, 6]} /><path d="M13.5 11.5V17" stroke={K} /></>],
  ["맵", <><circle cx="9" cy="7" r="5.6" fill="#fff" stroke={K} /><path d="M5 5 9 2.5 12 5 9 7.5ZM9 9 13 7 13.5 10 10 12ZM4 8 7 9.5 6 11.5Z" fill="#2f9e44" /><path d="M13.5 1A8 8 0 0 1 6 14.5L3 12M9 14.5V17M3 17.5H15" stroke={K} /></>],
  ["등치 지역도", <><path d="M1 2H8L9 8 5 11 1 8Z" fill={L} stroke={B} /><path d="M8 2H13L17.5 1V9H9Z" fill={G} stroke={D} /><path d="M1 8 5 11 9 8V16H5L2 13Z" fill={G} stroke={D} /><path d="M9 9H17.5L16 14 12 16H9Z" fill={L} stroke={B} /></>],
  ["Azure 맵", <><path d="M12.5 -.5 15.5 18 10 14Z" fill="#0063b1" /><path d="M12.5 -.5 1 17 12 13Z" fill="#3ba3dd" /></>],
  ["계기", <><path d="M.6 13A8.4 8.4 0 0 1 9 4.6V9A4 4 0 0 0 5 13Z" fill="#fff" stroke={K} /><path d="M9 4.6A8.4 8.4 0 0 1 17.4 13H13A4 4 0 0 0 9 9Z" fill={L} stroke={B} /><path d="M7.5 13 13 6.5 9.5 14Z" fill={K} /></>],
  ["카드", <><Box r={[0.5, 2.5, 17, 13]} /><text x="9" y="11" fontSize="8" textAnchor="middle" fill="#2b88d8">123</text><path d="M3 13.5H15" stroke={G} /></>],
  ["여러 행 카드", <><Box r={[0.5, 1.5, 17, 16]} /><path d="M3.5 4V15" stroke={K} /><path d="M5 6H15M5 10H12" stroke={B} strokeWidth="2" /><path d="M5 14.5H14" stroke={D} /></>],
  ["KPI", <><Box r={[0.5, 2.5, 17, 13]} /><path d="M2 11 5 5 8 11Z" fill="#2f9e44" /><path d="M10 5H16L13 11Z" fill="#e03131" /><path d="M3 13.5H15" stroke={D} /></>],
  ["슬라이서", <><Box r={[0.5, 1.5, 16, 3]} f={G} s={D} /><path d="M.5 4.5V17.5H9M16.5 4.5V8" stroke={K} /><Box r={[3.5, 7.5, 3, 3]} f={G} s={D} /><Box r={[3.5, 12.5, 3, 3]} f={G} s={D} /><path d="M9 9H18V10.5L15 13.5V18H12.5V13.5L9 10.5Z" fill="#fff" stroke={K} /></>],
  ["테이블", <><Box r={[0.5, 0.5, 17, 17]} /><Box r={[0.5, 0.5, 17, 3]} f={G} /><path d="M.5 8.5H17.5M.5 13H17.5M6 3.5V17.5M12 3.5V17.5" stroke={D} /></>],
  ["행렬", <><Box r={[0.5, 0.5, 17, 17]} /><Box r={[6, 8, 11.5, 9.5]} f={L} s={B} /><Box r={[11.5, 4, 6, 13.5]} f={L} s={B} /><Box r={[0.5, 12.5, 17, 5]} f={L} s={B} /><Box r={[0.5, 0.5, 17, 3]} f={G} /><path d="M.5 8.5H17.5M.5 12.5H17.5M6 3.5V17.5M12 3.5V17.5" stroke={K} /></>],
  ["R 스크립트 시각적 개체", <text x="8" y="15" fontSize="15" fontWeight="700" textAnchor="middle" fill="#1f83c6">R</text>],
  ["Python 시각적 개체", <text x="9" y="14" fontSize="15" fontWeight="700" textAnchor="middle" fill="#1f83c6">Py</text>],
  ["주요 영향 요인", <>{axis}<path d="M1 4H13" stroke="#2b88d8" /><circle cx="14.5" cy="4" r="2.2" fill={L} stroke={B} /><path d="M1 8.5H9M1 13H5" stroke={D} /><Box r={[9.5, 7.5, 3, 3]} f={G} s={D} /><Box r={[5.5, 11.5, 3, 3]} f={G} s={D} /></>],
  ["분해 트리", <><Box r={[0.5, 6.5, 6, 4]} f={L} s={B} /><path d="M6.5 8.5H12M9 8.5V2.5H12M9 8.5V15H12" stroke={K} /><Box r={[11.5, 0.5, 6, 4]} f={L} s={B} /><Box r={[11.5, 6.5, 6, 4]} f={L} s={B} /><Box r={[11.5, 12.5, 6, 4]} f={L} s={B} /></>],
  ["질문 및 답변", <path d="M.5 1.5H17.5V12.5H8L4 16.5V12.5H.5Z" fill="#fff" stroke={B} />],
  ["내러티브", <><path d="M4.5 .5H10L14.5 5V17.5H2.5V9M10 .5V5H14.5" stroke={K} fill="#fff" /><circle cx="2.5" cy="7" r="2" fill={L} stroke={B} /><path d="M5 8.5H12M5 12H10" stroke="#2b88d8" /></>],
  ["메트릭", <><path d="M4.5 1.5H13.5V7A4.5 4.5 0 0 1 4.5 7ZM4.5 3H.5C.5 6 2 8 5 8.5M13.5 3H17.5C17.5 6 16 8 13 8.5" stroke={K} fill="#fff" /><path d="M9 11.5V14" stroke={K} /><Box r={[4.5, 14.5, 9, 2.5]} f={L} s={B} /><path d="M4 1.5H14" stroke={B} /></>],
  ["페이지를 매긴 보고서", <><path d="M2.5 .5H11L16 5.5V17.5H2.5ZM11 .5V5.5H16" fill="#fff" stroke={K} strokeWidth="1.3" /><path d="M5 11H7V16H5ZM8.5 13H10.5V16H8.5ZM12 9H14V16H12Z" fill={K} /></>],
  ["카드(신규)", <><Box r={[2.5, 3.5, 15, 13]} /><text x="11" y="12" fontSize="8" textAnchor="middle" fill="#2b88d8">123</text><path d="M5 14.5H15" stroke={G} />{bolt}</>],
  ["슬라이서(신규)", <><Box r={[5.5, 1.5, 11, 3]} f={G} s={D} /><path d="M1.5 10V17.5H9M16.5 4.5V8" stroke={K} /><Box r={[4.5, 12.5, 3, 3]} f={G} s={D} /><path d="M10 9H19V10.5L16 13.5V18H13.5V13.5L10 10.5Z" fill="#fff" stroke={K} />{bolt}</>],
  ["ArcGIS", <><path d="M5 1H17V16H2V10Z" fill="#fff" stroke={B} /><path d="M17 1H11L9 6 5 9V16H10L12 10 17 7Z" fill={L} stroke={B} /><path d="M0 -.5H6V6L3 10 0 6Z" fill="#d86c00" /><circle cx="3" cy="3.2" r="1.3" fill="#fff" /><circle cx="16.5" cy="15.5" r="2.2" fill="#d86c00" /></>],
  ["Power Apps", <g stroke="#9b3fa5" fill="#fff" strokeWidth="1.1"><path d="M9 3.5 12 .8 17.2 9 12 17.2 9 14.5 6 17.2 .8 9 6 .8Z" fill="none" stroke="none" /><rect x="-3" y="-3" width="6" height="6" rx="1.5" transform="translate(9 4.7) rotate(45)" /><rect x="-3" y="-3" width="6" height="6" rx="1.5" transform="translate(4.7 9) rotate(45)" /><rect x="-3" y="-3" width="6" height="6" rx="1.5" transform="translate(13.3 9) rotate(45)" /><rect x="-3" y="-3" width="6" height="6" rx="1.5" transform="translate(9 13.3) rotate(45)" /></g>],
  ["Power Automate", <path d="M.7 2.5H11L17.3 9 11 15.5H.7L7 9ZM5 2.5 11.5 9 5 15.5M3.5 12.5 13 5" fill="#fff" fillOpacity="0.4" stroke="#1f7fd6" strokeWidth="1.1" />],
];

const VizPane = () => (
  <aside className="flex w-[223px] shrink-0 flex-col bg-[#f3f2f1] text-[13px] text-[#252423]">
    <header className="flex h-[38px] items-center justify-between pr-2 pl-2">
      <h2 className="text-[17px] font-medium">시각화</h2>
      <button aria-label="시각화 창 축소"><DoubleChevron /></button>
    </header>
    <h3 className="h-[19px] pl-2 text-[13px] leading-[14px] font-medium">시각적 개체 빌드</h3>
    <div className="relative flex h-[45px] items-start gap-[34px] border-b border-[#8a8886] pl-2">
      <button aria-label="시각적 개체 빌드" className="flex size-8 items-center justify-center bg-[#d2d0ce]">
        <Svg s={24}>
          <path d="M0 .7H19" stroke={K} />
          <path d="M.5 6H23.5V12H.5ZM.5 17H23.5V23H.5Z" fill="#117865" stroke={K} strokeDasharray="2 1" />
        </Svg>
      </button>
      <button aria-label="시각적 개체 서식" className="flex size-8 items-center justify-center">
        <Svg s={23}>
          <path d="M1 20V10.5H6V18M6 14V1H12V12M12 6H17V8" stroke={D} strokeWidth="1.3" />
          <path d="M21.5 7 10 16.5 12.5 19 22 8ZM10 16.5C7 16.5 8 20.5 4 21 8 23 12.5 22 12.5 19Z" fill="#fff" stroke={K} strokeWidth="1.1" />
        </Svg>
      </button>
      <button aria-label="분석" className="flex size-8 items-center justify-center">
        <Svg s={24}>
          <circle cx="10.5" cy="10.5" r="9.8" strokeWidth="1.3" fill="#fff" />
          <path d="M1.5 12 7 7 11 10 18 4.5M5.5 18V13.5H7.5V19M9.5 19.5V12.5H11.5V19.5M13.5 19V9.5H15.5V18" strokeWidth="1.1" />
          <path d="M18 18 23 23" strokeWidth="2.4" />
        </Svg>
      </button>
      <svg width="16" height="9" viewBox="0 0 16 9" className="absolute -bottom-px left-4" aria-hidden="true">
        <path d="M0 9 8 .7 16 9Z" fill="#f3f2f1" />
        <path d="M0 8.5 8 .7 16 8.5" fill="none" stroke="#8a8886" />
      </svg>
    </div>
    <div className="grid grid-cols-7 gap-y-1 pt-2 pr-1.5 pl-1.5">
      {gallery.map(([label, icon]) => (
        <button key={label} aria-label={label} className={clsx("flex h-6 w-6 items-center justify-center justify-self-center", label === "테이블" && "outline outline-[#323130]")}>
          <svg width="18" height="18" viewBox="0 0 18 18" fill="none" className="overflow-visible" aria-hidden="true">{icon}</svg>
        </button>
      ))}
    </div>
    <button className="h-[34px] border-b border-[#d8d6d4] pb-1 pl-[13px] text-left leading-4" aria-label="추가 시각적 개체">
      <Svg w={17} h={4}><path d="M1 1H3V3H1ZM7.5 1H9.5V3H7.5ZM14 1H16V3H14Z" fill={K} stroke="none" /></Svg>
    </button>
    <h3 className="pt-[9px] pl-[13px] text-[12px] leading-[18px]">열</h3>
    <ul className="mx-1 mt-1 mr-1.5 flex flex-col gap-0.5 border border-dashed border-[#b3b0ad] bg-white px-0.5 pt-[3px] pb-[9px]">
      {["Department", "JobRole", "KoreanJobLevel", "Retired Rate", "Working HC"].map((f) => (
        <li key={f} className="flex h-[23px] items-center rounded-xs border border-[#c8c6c4] bg-[#ebeae9] px-1 text-[11px]">
          <span className="flex-1">{f}</span>
          <button aria-label={`${f} 옵션`} className="text-[#484644]"><ChevronDown /></button>
          <button aria-label={`${f} 제거`} className="ml-1.5 text-[#484644]"><Svg s={8}><path d="M.3 .3 7.7 7.7M7.7 .3 .3 7.7" /></Svg></button>
        </li>
      ))}
    </ul>
    <h3 className="mt-2 pl-[13px] leading-[18px] text-[#484644]">드릴스루</h3>
    <label className="mt-[5px] flex h-[26px] items-center justify-between pr-[22px] pl-[13px]">
      교차 보고서
      <span className="relative flex">
        <input type="checkbox" role="switch" className="h-4 w-8 appearance-none rounded-full border border-[#797775] bg-white" />
        <i className="absolute top-1 left-[5px] size-2 rounded-full bg-[#605e5c]" />
      </span>
    </label>
    <label className="flex h-[26px] items-center justify-between pr-[22px] pl-[13px]">
      모든 필터 유지
      <span className="relative flex">
        <input type="checkbox" role="switch" defaultChecked className="h-4 w-8 appearance-none rounded-full bg-[#117865]" />
        <i className="absolute top-1 right-[5px] size-2 rounded-full bg-white" />
        <Svg w={10} h={8} className="absolute top-1 left-1.5"><path d="M1 4 3.7 6.5 9 1" stroke="#fff" strokeWidth="2" /></Svg>
      </span>
    </label>
    <p className="mt-[5px] mr-1.5 ml-1 border border-dashed border-[#b3b0ad] bg-white pl-2 leading-6">여기에 드릴스루 필드 추가</p>
  </aside>
);

/* ---------- data pane ---------- */

const kindIcon = {
  calc: (
    <Svg w={12} h={14}>
      <rect x=".5" y=".5" width="11" height="13" rx="2" />
      <path d="M3 3H9V5.5H3Z" />
      <path d="M3 8H4M5.5 8H6.5M8 8H9M3 10.8H4M5.5 10.8H6.5M8 10.8H9" strokeWidth="1.3" />
    </Svg>
  ),
  sum: (
    <Svg w={12} h={13}><path d="M11 2V.6H1L6 6.3 1 12.3H11V10.8" strokeWidth="1.1" /></Svg>
  ),
};

const DataPane = () => (
  <aside className="relative flex w-[248px] shrink-0 flex-col border-l border-[#d8d6d4] bg-[#f3f2f1] pl-1 text-[#252423]">
    <header className="flex h-[38px] items-center justify-between pr-2 pl-[5px]">
      <h2 className="text-[17px] font-medium">데이터</h2>
      <button aria-label="데이터 창 축소"><DoubleChevron /></button>
    </header>
    <label className="mt-[7px] mr-1 flex h-6 items-center rounded border border-[#d2d0ce] border-b-[#605e5c] bg-white pl-3">
      <Svg s={14}><circle cx="5.8" cy="5.8" r="5" stroke="#605e5c" /><path d="M9.5 9.5 13.5 13.5" stroke="#605e5c" /></Svg>
      <input type="search" aria-label="검색" placeholder="검색" className="ml-2 w-40 text-[14px] outline-none placeholder:text-[#605e5c]" />
    </label>
    <ul className="mt-2.5 text-[11px]">
      {tables.map((t) => (
        <li key={t.name}>
          <div className="flex h-6 items-center pl-[9px]">
            <button aria-label={`${t.name} 축소`} className="text-[#605e5c]"><ChevronDown /></button>
            <Svg w={18} h={18} className="mr-px ml-[3px]">
              <rect x=".6" y="2.6" width="11" height="11" rx="2" />
              <path d="M.6 6.2H11.6M.6 10H11.6M4.3 2.6V13.6M8 2.6V13.6" />
              <circle cx="12" cy="13" r="5.5" fill="#117865" stroke="none" />
              <path d="M9.7 13.2 11.4 14.8 14.4 11.6" stroke="#fff" strokeWidth="1.3" />
            </Svg>
            {t.name}
          </div>
          {t.fields.map((f) => (
            <label key={f.name} className="flex h-6 items-center pl-10">
              <Check on={f.on} size="size-3 rounded-xs" label={f.name} />
              <span className="mr-1.5 ml-2 w-3">{f.kind && kindIcon[f.kind]}</span>
              {f.name}
            </label>
          ))}
        </li>
      ))}
    </ul>
    <div className="absolute top-[77px] right-1 h-[366px] w-2 bg-[#c8c6c4]" />
  </aside>
);

const StatusBar = () => (
  <footer className="flex h-6 shrink-0 items-center justify-between border-t border-[#d8d6d4] bg-[#f3f2f1] pr-[18px] pl-1 text-[12px] text-[#484644]">
    <span>2/8 페이지</span>
    <div className="flex items-center">
      <button aria-label="축소" className="font-bold">-</button>
      <span className="relative mx-1 flex">
        <input
          type="range"
          aria-label="확대/축소"
          min={0}
          max={100}
          defaultValue={28}
          className="h-3 w-[100px] appearance-none bg-[linear-gradient(#605e5c,#605e5c)] bg-size-[100%_1px] bg-center bg-no-repeat [&::-webkit-slider-thumb]:h-3 [&::-webkit-slider-thumb]:w-1 [&::-webkit-slider-thumb]:appearance-none [&::-webkit-slider-thumb]:bg-[#605e5c]"
        />
        <i className="absolute top-1 left-1/2 h-1.5 w-px bg-[#605e5c]" />
      </span>
      <button aria-label="확대" className="ml-0.5">
        <Svg s={8}><path d="M4 .5V7.5M.5 4H7.5" strokeWidth="1.3" /></Svg>
      </button>
      <span className="mr-5 ml-3.5 text-[11px]">60%</span>
      <button aria-label="페이지에 맞추기">
        <Svg w={16} h={12}><path d="M.6 .6H15.4V11.4H.6Z" strokeWidth="1.2" /><path d="M3 5V3H5M11 3H13V5M13 7V9H11M5 9H3V7" /></Svg>
      </button>
    </div>
  </footer>
);

const App: React.FC = () => {
  return (
    <div className="flex h-screen flex-col overflow-hidden bg-[#f3f2f1] font-['Open_Sans','Noto_Sans_CJK_KR',sans-serif]">
      <TitleBar />
      <div className="z-10 shrink-0 bg-[#fafafa] shadow-[0_1px_4px_rgba(0,0,0,0.25)]">
        <MenuTabs />
        <Ribbon />
      </div>
      <div className="flex min-h-0 flex-1">
        <Rail />
        <div className="flex min-w-0 flex-1 flex-col">
          <div className="flex min-h-0 flex-1">
            <Canvas />
            <FilterPane />
          </div>
          <PageTabs />
        </div>
        <QuickMeasures />
        <VizPane />
        <DataPane />
      </div>
      <StatusBar />
    </div>
  );
};

export default App;
